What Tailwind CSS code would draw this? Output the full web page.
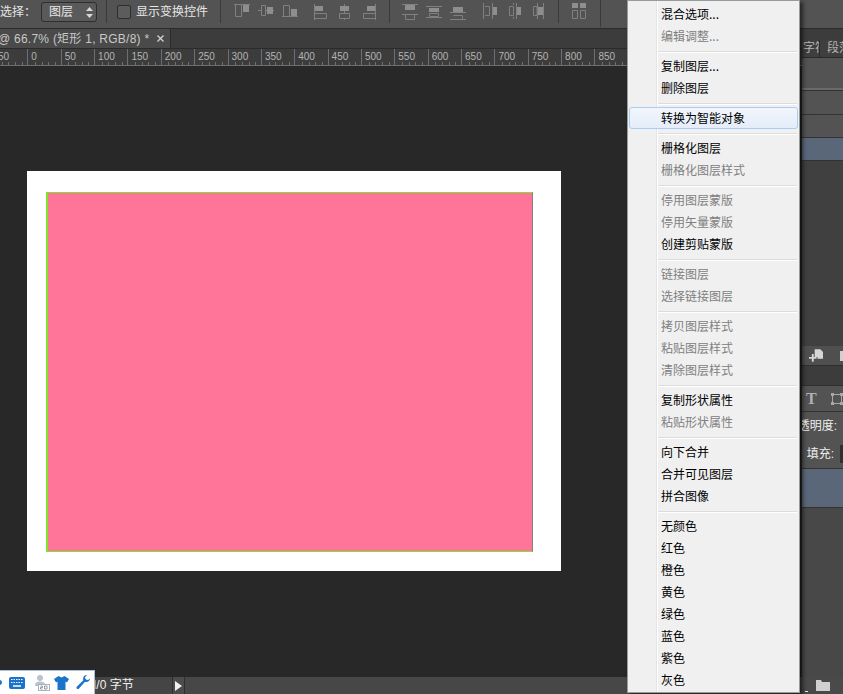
<!DOCTYPE html>
<html>
<head>
<meta charset="utf-8">
<script src="https://cdn.jsdelivr.net/npm/@tailwindcss/browser@4"></script>
</head>
<body class="bg-[#282828]">
<div class="relative w-[843px] h-[694px] overflow-hidden flex flex-col font-['Liberation_Sans','Noto_Sans_CJK_SC',sans-serif] text-[12px] select-none">

    <!-- options bar -->
    <div class="h-[28px] shrink-0 bg-[#535353] flex items-start text-[#e6e6e6] border-b border-[#2b2b2b] box-content">
        <span class="w-[41px] pt-[4px] leading-[16px] whitespace-nowrap overflow-hidden">选择：</span>
        <div class="w-[56px] h-[20px] mt-[2px] bg-[#5a5a5a] border border-[#2e2e2e] rounded-[3px] flex items-center justify-between pl-[7px] pr-[3px]">
            <span>图层</span>
            <svg width="7" height="11" viewBox="0 0 7 11" fill="#d8d8d8"><path d="M3.5 0L7 4H0zM3.5 11L0 7H7z"/></svg>
        </div>
        <div class="w-px h-[23px] ml-[9px] bg-[#3a3a3a]"></div>
        <div class="w-[14px] h-[14px] ml-[10px] mt-[5px] bg-[#5c5c5c] border border-[#2e2e2e] rounded-[2px]"></div>
        <span class="ml-[5px] pt-[4px] leading-[16px] w-[84px] whitespace-nowrap">显示变换控件</span>
        <div class="w-px h-[23px] bg-[#3a3a3a]"></div>

        <!-- align icons -->
        <div class="flex gap-2 ml-[13px] mt-[4px]">
            <svg class="w-4 h-4" viewBox="0 0 16 16" fill="none" stroke="#808080"><path d="M0 .5H16M1.5 1V12.5H7.5V1"/><rect x="9" y="1" width="6" height="7" fill="#8e8e8e" stroke="none"/></svg>
            <svg class="w-4 h-4" viewBox="0 0 16 16" fill="none" stroke="#808080"><path d="M0 6.5H3M8 6.5H9M15 6.5H16M3.5 1.5H7.5V11.5H3.5Z"/><rect x="9" y="3" width="6" height="7" fill="#8e8e8e" stroke="none"/></svg>
            <svg class="w-4 h-4" viewBox="0 0 16 16" fill="none" stroke="#808080"><path d="M0 12.5H16M1.5 12V1.5H7.5V12"/><rect x="9" y="5" width="6" height="7" fill="#8e8e8e" stroke="none"/></svg>
        </div>
        <div class="flex gap-2 ml-[16px] mt-[4px]">
            <svg class="w-4 h-4" viewBox="0 0 16 16" fill="none" stroke="#808080"><path d="M.5 0V16M1 9.5H12.5V14.5H1"/><rect x="1" y="2" width="8" height="5" fill="#8e8e8e" stroke="none"/></svg>
            <svg class="w-4 h-4" viewBox="0 0 16 16" fill="none" stroke="#808080"><path d="M6.5 0V2M6.5 7V10M6.5 15V16M1.5 9.5H11.5V14.5H1.5Z"/><rect x="2" y="2" width="9" height="5" fill="#8e8e8e" stroke="none"/></svg>
            <svg class="w-4 h-4" viewBox="0 0 16 16" fill="none" stroke="#808080"><path d="M13.5 0V16M13 9.5H1.5V14.5H13"/><rect x="5" y="2" width="8" height="5" fill="#8e8e8e" stroke="none"/></svg>
        </div>
        <div class="w-px h-[23px] ml-[11px] bg-[#3a3a3a]"></div>
        <div class="flex gap-2 ml-[12px] mt-[4px]">
            <svg class="w-4 h-4" viewBox="0 0 16 16" fill="none" stroke="#808080"><path d="M0 .5H16M0 10.5H16M3.5 11V15.5H12.5V11"/><rect x="3" y="1" width="10" height="5" fill="#8e8e8e" stroke="none"/></svg>
            <svg class="w-4 h-4" viewBox="0 0 16 16" fill="none" stroke="#808080"><path d="M0 2.5H16M0 13.5H16M3.5 9.5H12.5V12.5H3.5Z"/><rect x="3" y="4" width="10" height="4" fill="#8e8e8e" stroke="none"/></svg>
            <svg class="w-4 h-4" viewBox="0 0 16 16" fill="none" stroke="#808080"><path d="M0 8.5H16M0 15.5H16M3.5 11.5H12.5V15"/><rect x="3" y="3" width="10" height="5" fill="#8e8e8e" stroke="none"/></svg>
        </div>
        <div class="flex gap-2 ml-[17px] mt-[3px]">
            <svg class="w-4 h-4" viewBox="0 0 16 16" fill="none" stroke="#808080"><path d="M.5 0V16M9.5 0V16M2 3.5H6.5V12.5H2"/><rect x="10" y="4" width="4" height="8" fill="#8e8e8e" stroke="none"/></svg>
            <svg class="w-4 h-4" viewBox="0 0 16 16" fill="none" stroke="#808080"><path d="M6.5 0V2M6.5 14V16M9.5 0V16M2.5 3.5H6.5V12.5H2.5Z"/><rect x="10" y="4" width="4" height="8" fill="#8e8e8e" stroke="none"/></svg>
            <svg class="w-4 h-4" viewBox="0 0 16 16" fill="none" stroke="#808080"><path d="M6.5 0V16M12.5 0V16M2.5 3.5H6V12.5H2.5Z"/><rect x="7" y="4" width="5" height="8" fill="#8e8e8e" stroke="none"/></svg>
        </div>
        <div class="w-px h-[23px] ml-[11px] bg-[#3a3a3a]"></div>
        <svg class="w-4 h-4 ml-[12px] mt-[3px]" viewBox="0 0 16 16" fill="none" stroke="#808080"><path d="M1.5 7.5H6.5V15.5H1.5ZM9.5 7.5H14.5V15.5H9.5Z"/><rect x="1" y="0" width="6" height="5" fill="#8e8e8e" stroke="none"/><rect x="9" y="0" width="6" height="5" fill="#8e8e8e" stroke="none"/></svg>
        <div class="w-px h-[27px] ml-[13px] bg-[#3a3a3a]"></div>
    </div>

    <div class="flex-1 flex min-h-0">
        <!-- document column -->
        <div class="w-[802px] shrink-0 flex flex-col">
            <div class="h-[19px] shrink-0 bg-[#3c3c3c] flex">
                <div class="w-[171px] bg-[#4a4a4a] border-r border-[#2b2b2b] flex items-center justify-between pr-[6px] overflow-hidden text-[#c8c8c8] whitespace-nowrap">
                    <span class="-ml-[2px] tracking-[0.25px]">@ 66.7% (矩形 1, RGB/8) *</span>
                    <svg width="7" height="7" viewBox="0 0 7 7" stroke="#d0d0d0" stroke-width="1.4"><path d="M.5 .5L6.5 6.5M6.5 .5L.5 6.5"/></svg>
                </div>
            </div>
            <div id="ruler" class="h-[18px] shrink-0 flex bg-[#3c3c3c] border-t border-[#2b2b2b] border-b border-b-[#6e6e6e] overflow-hidden -ml-[6px]"></div>

            <!-- canvas -->
            <div class="flex-1 bg-[#282828] pt-[105px] pl-[27px]">
                <div class="w-[534px] h-[400px] bg-white pt-[21px] pl-[19px]">
                    <div class="w-[487px] h-[360px] bg-[#ff7599] border-y border-l-2 border-[#7fe52c] border-r border-r-[#808080]"></div>
                </div>
            </div>

            <!-- status bar -->
            <div class="h-[17px] shrink-0 bg-[#474747] flex items-center">
                <div class="w-[172px] h-full pl-[93px] bg-[#454545] text-[#f0f0f0] leading-[17px] whitespace-nowrap">I/0 字节</div>
                <div class="w-[13px] h-full bg-[#4c4c4c] border-x border-[#2f2f2f] flex items-center justify-center">
                    <svg width="7" height="10" viewBox="0 0 7 10" fill="#f0f0f0"><path d="M0 0L7 5L0 10Z"/></svg>
                </div>
            </div>
        </div>

        <!-- side panels -->
        <div class="flex-1 flex flex-col bg-[#484848] text-[#eeeeee] whitespace-nowrap overflow-hidden">
            <div class="h-[11px] shrink-0 bg-[#3c3c3c]"></div>
            <div class="h-[18px] shrink-0 bg-[#3f3f3f] border-b border-[#2a2a2a] flex text-[#b4b4b4] leading-[17px]">
                <div class="w-[18px] shrink-0 pl-px overflow-hidden border-r border-[#2a2a2a]">字符</div>
                <div class="pl-[7px] w-[23px] overflow-hidden">段落</div>
            </div>
            <div class="h-[32px] shrink-0 bg-[#535353] border-b-2 border-[#6a6a6a]"></div>
            <div class="h-[1px] shrink-0 bg-[#333333]"></div>
            <div class="h-[24px] shrink-0 bg-[#535353] border-b border-[#333333]"></div>
            <div class="h-[23px] shrink-0 bg-[#535353] border-b border-[#333333]"></div>
            <div class="h-[23px] shrink-0 bg-[#5a6779] border-b border-[#333333]"></div>
            <div class="h-[185px] shrink-0 bg-[#404040]"></div>
            <div class="h-[20px] shrink-0 bg-[#4f4f4f] border-b border-[#2f2f2f] pl-[7px] flex items-center">
                <svg width="15" height="13" viewBox="0 0 15 13" fill="#d6d6d6"><path d="M6 0H12L15 3V10H9V8H6ZM0 8H3V5H5V8H8V10H5V13H3V10H0Z"/></svg>
                <div class="w-[3px] h-[10px] ml-[17px] bg-[#d0d0d0]"></div>
            </div>
            <div class="h-[20px] shrink-0 bg-[#3c3c3c] border-b border-[#2f2f2f]"></div>
            <div class="h-[26px] shrink-0 bg-[#535353] border-b border-[#333333] flex items-center gap-[14px] pl-[4px] pt-[1px]">
                <span class="font-['Liberation_Serif',serif] text-[16px] font-bold text-[#b0b0b0]">T</span>
                <svg class="shrink-0" width="12" height="12" viewBox="0 0 12 12" fill="none" stroke="#a8a8a8"><path d="M1.5 1.5H10.5V10.5H1.5Z"/><path d="M0 0H3V3H0ZM9 0H12V3H9ZM0 9H3V12H0ZM9 9H12V12H9Z" fill="#a8a8a8" stroke="none"/></svg>
            </div>
            <div class="h-[28px] shrink-0 bg-[#535353] flex items-center justify-end gap-[6px]">
                <span>透明度:</span>
                <div class="w-[3px] h-[18px] bg-[#2f2f2f]"></div>
            </div>
            <div class="h-[29px] shrink-0 bg-[#535353] border-b border-[#333333] flex items-center justify-end gap-[6px]">
                <span>填充:</span>
                <div class="w-[3px] h-[18px] bg-[#2f2f2f]"></div>
            </div>
            <div class="h-[39px] shrink-0 bg-[#5a6779] border-b border-[#333333]"></div>
            <div class="flex-1 bg-[#484848]"></div>
            <div class="h-[17px] shrink-0 bg-[#4a4a4a] flex items-center pl-[3px]">
                <div class="w-[3px] h-px mt-[11px] bg-[#e8e8e8]"></div>
                <svg class="ml-[8px]" width="14" height="11" viewBox="0 0 14 11" fill="#d0d0d0"><path d="M0 0H5L6 2H14V11H0Z"/></svg>
            </div>
        </div>
    </div>

    <!-- tray popup -->
    <div class="absolute left-0 bottom-0 w-[95px] h-[24px] bg-white border-t border-r border-[#a9c2d9] flex items-center">
        <svg class="-ml-[3px]" width="5" height="5" viewBox="0 0 5 5" fill="#1b74c9"><circle cx="2.5" cy="2.5" r="2.5"/></svg>
        <svg class="ml-[7px]" width="16" height="12" viewBox="0 0 16 12"><rect width="16" height="12" rx="2" fill="#1b74c9"/><path d="M2 2.500H14M2 5.500H14" stroke="#ffffff" stroke-dasharray="1.500 1"/><path d="M4 9H12" stroke="#ffffff" stroke-width="1.500"/></svg>
        <svg class="ml-[8px]" width="17" height="16" viewBox="0 0 17 16"><circle cx="7" cy="3" r="3" fill="#b9c3cf"/><path d="M2 11C2 7.500 4 6.500 7 6.500S12 7.500 12 9H6V11Z" fill="#b9c3cf"/><rect x="5.500" y="9.500" width="11" height="6" fill="#ffffff" stroke="#aab4c0"/><path d="M7.500 11H9.500V12.500H7.500V14H9.500M11.500 11H14V14H11.500Z" fill="none" stroke="#8f9aa7"/></svg>
        <svg class="ml-[4px]" width="15" height="14" viewBox="0 0 15 14" fill="#1b74c9"><path d="M4.500 0L7.500 1.500L10.500 0L15 3L13 6.500L11.500 5.500V14H3.500V5.500L2 6.500L0 3Z"/></svg>
        <svg class="ml-[7px]" width="14" height="15" viewBox="0 0 14 15" fill="#1b74c9"><path d="M14 3.500C14 6 11.500 7.500 9 6.800L3 13.500C1.500 15 -.5 13 1 11.500L7.300 5.200C6.500 2.500 8 0 11 0L8.800 2.500L10 4.500L12 5L14 3.500Z"/></svg>
    </div>

    <!-- context menu -->
    <div class="absolute left-[627px] top-0 w-[173px] h-[693px] bg-[#f0f0f0] border border-[#9a9a9a] pt-[2px] leading-[21px] text-black font-['Noto_Sans_CJK_SC',sans-serif] shadow-[3px_2px_4px_rgba(0,0,0,0.55)]">
        <div class="absolute left-[28px] top-0 bottom-0 w-[2px] bg-[#e4e4e4] border-r border-white"></div>
        <div class="relative pl-[33px] h-[22px]">混合选项...</div>
        <div class="relative pl-[33px] h-[22px] text-[#808080]">编辑调整...</div>
        <div class="h-[8px] pt-[4px] pl-[29px] pr-[2px]"><div class="h-[2px] bg-[#dcdcdc] border-b border-white"></div></div>
        <div class="relative pl-[33px] h-[22px]">复制图层...</div>
        <div class="relative pl-[33px] h-[22px]">删除图层</div>
        <div class="h-[8px] pt-[4px] pl-[29px] pr-[2px]"><div class="h-[2px] bg-[#dcdcdc] border-b border-white"></div></div>
        <div class="relative h-[22px] pl-[33px]">
            <div class="absolute left-[1px] right-[1px] top-0 bottom-0 rounded-[3px] border border-[#a9cdf4] bg-gradient-to-b from-[#f2f6fc] to-[#e4edf9]"></div>
            <span class="relative">转换为智能对象</span>
        </div>
        <div class="h-[8px] pt-[4px] pl-[29px] pr-[2px]"><div class="h-[2px] bg-[#dcdcdc] border-b border-white"></div></div>
        <div class="relative pl-[33px] h-[22px]">栅格化图层</div>
        <div class="relative pl-[33px] h-[22px] text-[#808080]">栅格化图层样式</div>
        <div class="h-[8px] pt-[4px] pl-[29px] pr-[2px]"><div class="h-[2px] bg-[#dcdcdc] border-b border-white"></div></div>
        <div class="relative pl-[33px] h-[22px] text-[#808080]">停用图层蒙版</div>
        <div class="relative pl-[33px] h-[22px] text-[#808080]">停用矢量蒙版</div>
        <div class="relative pl-[33px] h-[22px]">创建剪贴蒙版</div>
        <div class="h-[8px] pt-[4px] pl-[29px] pr-[2px]"><div class="h-[2px] bg-[#dcdcdc] border-b border-white"></div></div>
        <div class="relative pl-[33px] h-[22px] text-[#808080]">链接图层</div>
        <div class="relative pl-[33px] h-[22px] text-[#808080]">选择链接图层</div>
        <div class="h-[8px] pt-[4px] pl-[29px] pr-[2px]"><div class="h-[2px] bg-[#dcdcdc] border-b border-white"></div></div>
        <div class="relative pl-[33px] h-[22px] text-[#808080]">拷贝图层样式</div>
        <div class="relative pl-[33px] h-[22px] text-[#808080]">粘贴图层样式</div>
        <div class="relative pl-[33px] h-[22px] text-[#808080]">清除图层样式</div>
        <div class="h-[8px] pt-[4px] pl-[29px] pr-[2px]"><div class="h-[2px] bg-[#dcdcdc] border-b border-white"></div></div>
        <div class="relative pl-[33px] h-[22px]">复制形状属性</div>
        <div class="relative pl-[33px] h-[22px] text-[#808080]">粘贴形状属性</div>
        <div class="h-[8px] pt-[4px] pl-[29px] pr-[2px]"><div class="h-[2px] bg-[#dcdcdc] border-b border-white"></div></div>
        <div class="relative pl-[33px] h-[22px]">向下合并</div>
        <div class="relative pl-[33px] h-[22px]">合并可见图层</div>
        <div class="relative pl-[33px] h-[22px]">拼合图像</div>
        <div class="h-[8px] pt-[4px] pl-[29px] pr-[2px]"><div class="h-[2px] bg-[#dcdcdc] border-b border-white"></div></div>
        <div class="relative pl-[33px] h-[22px]">无颜色</div>
        <div class="relative pl-[33px] h-[22px]">红色</div>
        <div class="relative pl-[33px] h-[22px]">橙色</div>
        <div class="relative pl-[33px] h-[22px]">黄色</div>
        <div class="relative pl-[33px] h-[22px]">绿色</div>
        <div class="relative pl-[33px] h-[22px]">蓝色</div>
        <div class="relative pl-[33px] h-[22px]">紫色</div>
        <div class="relative pl-[33px] h-[22px]">灰色</div>
    </div>
</div>

<script>
// ruler: one cell per 50 units at 66.7% zoom
const ruler = document.getElementById('ruler');
for (let n = -50; n <= 850; n += 50) {
    const cell = document.createElement('div');
    cell.className = 'w-[33.37px] shrink-0 h-full border-l border-[#6e6e6e] pl-[3px] text-[10px] leading-[11px] pt-[2px] text-[#b4b4b4] relative';
    const ticks = [6.67, 13.35, 20.02, 26.7].map(x => `<i class="absolute bottom-0 w-px h-[3px] bg-[#6e6e6e]" style="left:${x}px"></i>`).join('');
    cell.innerHTML = Math.abs(n) + ticks;
    ruler.appendChild(cell);
}
</script>
</body>
</html>
